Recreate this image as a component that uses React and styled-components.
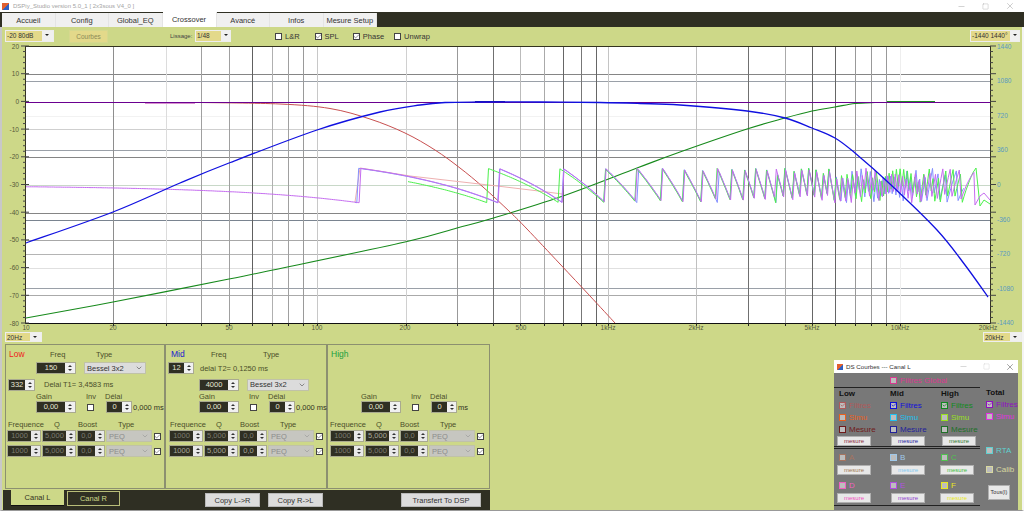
import React from 'react'
import styled, { createGlobalStyle } from 'styled-components'
import { Minus, Square, X, ChevronDown, Check } from 'lucide-react'

const Global = createGlobalStyle`
  html, body { margin: 0; padding: 0; background: #fff; }
  body { font-family: "Liberation Sans", Arial, sans-serif; }
  * { box-sizing: border-box; }
`

// frequency axis: 291px per decade, starting at 10Hz on x=26
const xToF = x => 10 * Math.pow(10, (x - 26) / 291)
const dbLines = [
  [74, '#858585'], [81, '#9aa0a8'], [116, '#f2f2f2'], [129, '#cfcfcf'], [150, '#9aa0a8'], [157, '#858585'],
  [185, '#c8d8c8'], [213, '#858585'], [220, '#7a8490'], [240, '#a8a8a8'], [254, '#b4b4b4'], [268, '#e0e0e0'],
  [288, '#9aa0a8'], [295, '#aaa'],
]
const freqLines = [
  [113, '#8e8e8e'], [166, '#dcdcdc'], [201, '#a0a0a0'], [229, '#a0a0a0'], [252, '#606060'], [272, '#b0b0b0'],
  [288, '#a0a0a0'], [303, '#9a9a9a'], [317, '#c8c8c8'], [406, '#d0d0d0'], [457, '#999'], [493, '#707070'],
  [520, '#bbb'], [544, '#aaa'], [563, '#666'], [581, '#777'], [596, '#666'], [608, '#c4c4c4'], [696, '#c0c0c0'],
  [748, '#707070'], [785, '#aaa'], [812, '#666'], [835, '#666'], [855, '#999'], [871, '#999'], [886, '#999'], [900, '#eee'],
]
const dbLabels = [20, 10, 0, -10, -20, -30, -40, -50, -60, -70, -80]
const phaseLabels = [1440, 1080, 720, 360, 0, -360, -720, -1080, -1440]
const freqLabels = [
  [26, '10'], [113, '20'], [229, '50'], [317, '100'], [405, '200'], [521, '500'], [608, '1kHz'], [696, '2kHz'],
  [812, '5kHz'], [900, '10kHz'], [988, '20kHz'],
]
const red = [[200, 102.5], [280, 104], [330, 108.5], [370, 119], [405, 133], [435, 150], [460, 168], [483, 187], [510, 212], [527, 229], [560, 264], [590, 296], [615, 323]]
const blue = [
  [26, 243], [113, 212], [180, 183], [229, 163], [317, 130], [380, 112], [420, 105], [445, 102.5], [480, 102], [540, 102],
  [600, 102.5], [640, 103.5], [680, 105], [747, 111], [785, 118], [812, 128], [835, 138], [855, 153], [890, 184],
  [937, 230], [965, 265], [988, 297],
]
const green = [
  [26, 318], [113, 302], [229, 279], [273, 270], [405, 242], [457, 228], [490, 219], [560, 197], [637, 168], [680, 152],
  [747, 129], [785, 118], [812, 111], [835, 107], [855, 103.5], [875, 102.5],
]
const pink = [[355, 202], [360, 168], [410, 176], [497, 186], [547, 192], [562, 194]]

const toPts = list => list.map(p => p.join(',')).join(' ')

// catmull-rom through the points, so the filter curves stay round
function smooth(p) {
  let d = `M${p[0][0]},${p[0][1]}`
  for (let i = 0; i < p.length - 1; i++) {
    const a = p[i - 1] || p[i]
    const b = p[i]
    const c = p[i + 1]
    const e = p[i + 2] || c
    const c1 = [b[0] + (c[0] - a[0]) / 6, b[1] + (c[1] - a[1]) / 6]
    const c2 = [c[0] - (e[0] - b[0]) / 6, c[1] - (e[1] - b[1]) / 6]
    d += ` C${c1[0]},${c1[1]} ${c2[0]},${c2[1]} ${c[0]},${c[1]}`
  }
  return d
}

function saw(from, to, wrapAt, period) {
  const pts = []
  for (let x = from; x <= to; x += 1.83) {
    const v = (xToF(x) - wrapAt) / period + 0.5
    const frac = v - Math.floor(v + 0.5)
    pts.push([x.toFixed(1), (185.5 + frac * 34.6).toFixed(1)])
  }
  return pts
}

const bluePhase = [...saw(355, 840, 138, 280), ...saw(841, 965, 170, 268)]
const greenPhase = [
  ...saw(408, 599, 385, 293), ...saw(600, 835, 130, 280), ...saw(836, 975, 150, 292),
  [976, 168], [980, 206], [984, 200], [990, 204],
]
const violetPhase = [...saw(26, 975, 140, 280), [975, 205], [980, 196], [984, 193], [990, 200]]

function Chart() {
  return (
    <PlotSvg viewBox="0 42 1024 290">
      <rect x="26" y="46" width="964" height="277" fill="#fff" />
      {dbLines.map(([v, c]) => <line key={v} x1="26" x2="990" y1={v + 0.5} y2={v + 0.5} stroke={c} />)}
      {freqLines.map(([v, c]) => <line key={v} x1={v + 0.5} x2={v + 0.5} y1="46" y2="323" stroke={c} />)}
      <path d={smooth(green)} fill="none" stroke="#178a1c" strokeWidth="1.1" />
      <path d={smooth(red)} fill="none" stroke="#c85050" strokeWidth="1" />
      <line x1="145" x2="195" y1="103.5" y2="103.5" stroke="#d890d0" />
      <line x1="26" x2="990" y1="102.5" y2="102.5" stroke="#6a0090" strokeWidth="1.2" />
      <line x1="887" x2="935" y1="101.5" y2="101.5" stroke="#209020" />
      <line x1="475" x2="505" y1="101.5" y2="101.5" stroke="#202070" />
      <polyline points={toPts(pink)} fill="none" stroke="#eeb0b0" strokeWidth="1" />
      <polyline points={toPts(bluePhase)} fill="none" stroke="#8590ff" strokeWidth="1" />
      <polyline points={toPts(greenPhase)} fill="none" stroke="#4cf04c" strokeWidth="1" />
      <polyline points={toPts(violetPhase)} fill="none" stroke="#c56cf0" strokeWidth="1" />
      <path d={smooth(blue)} fill="none" stroke="#1010e0" strokeWidth="1.3" />
      <line x1="26" x2="990" y1="46.5" y2="46.5" stroke="#33331f" />
      <line x1="26" x2="990" y1="323.5" y2="323.5" stroke="#111" />
      <line x1="25.5" x2="25.5" y1="46" y2="324" stroke="#33331f" />
      <line x1="990.5" x2="990.5" y1="46" y2="324" stroke="#33331f" />
      {freqLines.map(([v]) => <line key={v} x1={v + 0.5} x2={v + 0.5} y1="323" y2="326" stroke="#222" />)}
      {Array.from({ length: 51 }, (_, i) => 46 + i * 5.54).map((v, i) => (
        <g key={v}>
          <line x1={i % 5 === 0 ? 21 : 23} x2={i % 5 === 0 ? 29 : 26} y1={v} y2={v} stroke="#444" />
          <line x1={990} x2={i % 5 === 0 ? 996 : 993} y1={v} y2={v} stroke="#444" />
        </g>
      ))}
      {dbLabels.map((v, i) => <AxisText key={v} x="19" y={46 + i * 27.7 + 2.5} textAnchor="end">{v}</AxisText>)}
      {phaseLabels.map((v, i) => <PhaseText key={v} x="997" y={46 + i * 34.62 + 2.5}>{v}</PhaseText>)}
      {freqLabels.map(([v, t]) => <AxisText key={t} x={v} y="330" textAnchor="middle">{t}</AxisText>)}
    </PlotSvg>
  )
}

function Combo({ text, w, h = 12, arrowW = 11 }) {
  return (
    <ComboBox $w={w} $h={h}>
      <ComboText>{text}</ComboText>
      <ComboArrow $w={arrowW} />
    </ComboBox>
  )
}

function Spin({ value, w, bw = 9, tone, h = 12 }) {
  return (
    <SpinBox $w={w} $h={h}>
      <SpinField $tone={tone}>{value}</SpinField>
      <SpinBtns $w={bw} $tone={tone}>
        <ArrowUp />
        <ArrowDown />
      </SpinBtns>
    </SpinBox>
  )
}

function Sel({ text, w, off }) {
  return (
    <SelBox $w={w} $off={off}>
      <span>{text}</span>
      <ChevronDown size={8} strokeWidth={1.5} />
    </SelBox>
  )
}

function Tick({ on, ml }) {
  return <TickBox $ml={ml}>{on && <Check size={7} strokeWidth={1.8} />}</TickBox>
}

function PeqRows({ pl, tones }) {
  return (
    <>
      {tones.map((t, i) => (
        <PeqRow key={i} $pl={pl}>
          <Spin value="1000" w={34} tone={t[0]} />
          <Spin value="5,000" w={34} tone={t[1]} />
          <Spin value="0,0" w={28} tone={t[2]} />
          <Sel text="PEQ" w={46} off />
          <Tick on ml={1} />
        </PeqRow>
      ))}
    </>
  )
}

function PeqHead({ pl }) {
  return (
    <LabelRow $pl={pl} $mt={7} $mb={1}>
      <Lbl $w={46}>Frequence</Lbl>
      <Lbl $w={24}>Q</Lbl>
      <Lbl $w={40}>Boost</Lbl>
      <Lbl>Type</Lbl>
    </LabelRow>
  )
}

function GainRows({ pl, note }) {
  return (
    <>
      <LabelRow $pl={pl} $mt={1}>
        <Lbl $w={50}>Gain</Lbl>
        <Lbl $w={19}>Inv</Lbl>
        <Lbl>Délai</Lbl>
      </LabelRow>
      <ParamRow $pl={pl}>
        <Spin value="0,00" w={40} bw={10} />
        <Tick ml={11} />
        <SpinGap><Spin value="0" w={26} /></SpinGap>
        <Note>{note}</Note>
      </ParamRow>
    </>
  )
}

function Item({ color, label, on }) {
  return (
    <LegendItem $c={color}>
      <LegendBox $c={color}>{on && <Check size={6} strokeWidth={3} />}</LegendBox>
      {label}
    </LegendItem>
  )
}

function CourbesWindow() {
  return (
    <Win>
      <WinTitle>
        <WinIcon />
        <span>DS Courbes --- Canal L</span>
        <WinCtl>
          <Minus size={9} strokeWidth={1} color="#999" />
          <Square size={7} strokeWidth={1} color="#bbb" />
          <X size={10} strokeWidth={1} color="#222" />
        </WinCtl>
      </WinTitle>
      <GlobalRow><Item color="#d83a90" label="Filtres Global" /></GlobalRow>
      <WinBody>
        <WinLeft>
          <Block>
            <Col>
              <Head>Low</Head>
              <Item color="#b05a5a" label="Filtres" on />
              <Item color="#e8601e" label="Simu" />
              <Item color="#701a1a" label="Mesure" />
              <Measure $c="#8a2a3a" $ml={-2}>mesure</Measure>
            </Col>
            <Col>
              <Head>Mid</Head>
              <Item color="#1010d8" label="Filtres" on />
              <Item color="#20c0f0" label="Simu" />
              <Item color="#22229a" label="Mesure" />
              <Measure $c="#2222a0" $ml={1}>mesure</Measure>
            </Col>
            <Col>
              <Head>High</Head>
              <Item color="#108a20" label="Filtres" on />
              <Item color="#98e020" label="Simu" />
              <Item color="#207028" label="Mesure" />
              <Measure $c="#307a30" $ml={1}>mesure</Measure>
            </Col>
          </Block>
          <Block $second>
            <Col $tight>
              <Item color="#a57460" label="A" />
              <Measure $c="#a07a50" $ml={-2}>mesure</Measure>
              <Item color="#f060c0" label="D" />
              <Measure $c="#f050c0" $ml={-2}>mesure</Measure>
            </Col>
            <Col $tight>
              <Item color="#a0c8e8" label="B" />
              <Measure $c="#80c8f0" $ml={1}>mesure</Measure>
              <Item color="#b050e0" label="E" />
              <Measure $c="#9040d0" $ml={1}>mesure</Measure>
            </Col>
            <Col $tight>
              <Item color="#50c050" label="C" />
              <Measure $c="#40c040" $ml={-1}>mesure</Measure>
              <Item color="#e8e820" label="F" />
              <Measure $c="#e8e820" $ml={-1}>mesure</Measure>
            </Col>
          </Block>
        </WinLeft>
        <WinRight>
          <Head>Total</Head>
          <Item color="#9010c0" label="Filtres" on />
          <Item color="#e030e0" label="Simu" />
          <RtaGap><Item color="#60d0d0" label="RTA" /></RtaGap>
          <CalGap><Item color="#d8d8a0" label="Calib" /></CalGap>
          <TousBtn>Tous(I)</TousBtn>
        </WinRight>
      </WinBody>
    </Win>
  )
}

export default function App() {
  return (
    <Page>
      <Global />
      <TitleBar>
        <AppIcon />
        <TitleText>DSPiy_Studio version 5.0_1 [ 2x3sous V4_0 ]</TitleText>
        <TitleCtl>
          <Minus size={9} strokeWidth={1} color="#888" />
          <Square size={7} strokeWidth={1} color="#888" />
          <X size={10} strokeWidth={1} color="#888" />
        </TitleCtl>
      </TitleBar>
      <TabBar>
        {['Accueil', 'Config', 'Global_EQ', 'Crossover', 'Avancé', 'Infos', 'Mesure Setup'].map(t => (
          <Tab key={t} $active={t === 'Crossover'}>{t}</Tab>
        ))}
      </TabBar>
      <Main>
        <Toolbar>
          <Combo text="-20  80dB" w={49} />
          <CourbesBtn>Courbes</CourbesBtn>
          <Lissage>Lissage:</Lissage>
          <Combo text="1/48" w={36} arrowW={9} />
          <CheckWrap $ml={44}><Tick /> L&amp;R</CheckWrap>
          <CheckWrap $ml={15}><Tick on /> SPL</CheckWrap>
          <CheckWrap $ml={14}><Tick on /> Phase</CheckWrap>
          <CheckWrap $ml={10}><Tick /> Unwrap</CheckWrap>
          <PushRight><Combo text="-1440  1440°" w={50} arrowW={9} /></PushRight>
        </Toolbar>
        <Chart />
        <RangeRow>
          <Combo text="20Hz" w={37} h={10} />
          <Combo text="20kHz" w={39} h={10} />
        </RangeRow>
        <Lower>
          <Panel $w={160}>
            <LabelRow $pl={3} $h={15}>
              <BandName $c="#f02020" $w={41}>Low</BandName>
              <Lbl $w={46}>Freq</Lbl>
              <Lbl>Type</Lbl>
            </LabelRow>
            <ParamRow $pl={30}>
              <Spin value="150" w={40} bw={10} />
              <SelGap><Sel text="Bessel  3x2" w={62} /></SelGap>
            </ParamRow>
            <DelayRow $pl={2}>
              <Spin value="332" w={27} />
              <DelayText $ml={9}>Delai T1= 3,4583 ms</DelayText>
            </DelayRow>
            <GainRows pl={30} note="0,000 ms" />
            <PeqHead pl={2} />
            <PeqRows pl={1} tones={[[1, 1, 1], [1, 1, 1]]} />
          </Panel>
          <Panel $w={162}>
            <LabelRow $pl={5} $h={15}>
              <BandName $c="#1818d0" $w={40}>Mid</BandName>
              <Lbl $w={52}>Freq</Lbl>
              <Lbl>Type</Lbl>
            </LabelRow>
            <ParamRow $pl={2}>
              <Spin value="12" w={26} />
              <DelayText $ml={6}>delai T2= 0,1250 ms</DelayText>
            </ParamRow>
            <DelayRow $pl={33}>
              <Spin value="4000" w={40} bw={10} />
              <SelGap><Sel text="Bessel  3x2" w={62} /></SelGap>
            </DelayRow>
            <GainRows pl={33} note="0,000 ms" />
            <PeqHead pl={4} />
            <PeqRows pl={3} tones={[[1, 1, 1], [0, 0, 0]]} />
          </Panel>
          <Panel $w={163}>
            <LabelRow $pl={3} $h={15}>
              <BandName $c="#20a040">High</BandName>
            </LabelRow>
            <EmptyRows />
            <GainRows pl={33} note="ms" />
            <PeqHead pl={2} />
            <PeqRows pl={2} tones={[[1, 0, 1], [1, 1, 1]]} />
          </Panel>
        </Lower>
        <BottomBar>
          <CanalTab $active>Canal L</CanalTab>
          <CanalTab>Canal R</CanalTab>
          <GreyBtn $w={55} $ml={85}>Copy L-&gt;R</GreyBtn>
          <GreyBtn $w={55} $ml={8}>Copy R-&gt;L</GreyBtn>
          <GreyBtn $w={80} $ml={78}>Transfert To DSP</GreyBtn>
        </BottomBar>
        <CourbesWindow />
      </Main>
    </Page>
  )
}

const Page = styled.div`
  width: 1024px;
  height: 513px;
  overflow: hidden;
  display: flex;
  flex-direction: column;
  background: #fff;
  color: #33331f;
`
const TitleBar = styled.div`
  height: 12px;
  display: flex;
  align-items: center;
  padding-left: 2px;
`
const AppIcon = styled.div`
  width: 7px;
  height: 7px;
  background: linear-gradient(135deg, #e06030 50%, #3060c0 50%);
  margin-right: 4px;
`
const TitleText = styled.span`
  font-size: 6px;
  color: #a4a4a4;
`
const TitleCtl = styled.div`
  margin-left: auto;
  display: flex;
  align-items: center;
  gap: 16px;
  padding-right: 9px;
`
const TabBar = styled.div`
  height: 15px;
  background: #2f2f23;
  display: flex;
  align-items: flex-end;
  padding-left: 2px;
`
const Tab = styled.div`
  width: ${p => (p.$active ? 54 : 53.5)}px;
  height: ${p => (p.$active ? 15 : 14)}px;
  background: ${p => (p.$active ? '#fff' : '#f0f0f0')};
  border-right: 1px solid #e4e4e4;
  font-size: 7.5px;
  color: #333;
  display: flex;
  align-items: center;
  justify-content: center;
`
const Main = styled.div`
  position: relative;
  width: 1024px;
  height: 484px;
  background: #cdd888;
  border-left: 2px solid #c8c8c8;
  border-right: 2px solid #f4f4f4;
  border-bottom: 1px solid #999;
  display: flex;
  flex-direction: column;
  flex: none;
`
const Toolbar = styled.div`
  height: 15px;
  padding: 3px 2px 0 3px;
  display: flex;
  align-items: flex-start;
  font-size: 8px;
`
const ComboBox = styled.div`
  width: ${p => p.$w}px;
  height: ${p => p.$h}px;
  display: flex;
  border: 1px solid #eee;
  background: #e3d98a;
  flex: none;
`
const ComboText = styled.div`
  flex: 1;
  font-size: 6.5px;
  line-height: 9px;
  padding-left: 1px;
  color: #333;
  white-space: nowrap;
  overflow: hidden;
`
const ComboArrow = styled.div`
  width: ${p => p.$w}px;
  background: #f0f0f0;
  position: relative;
  &::after {
    content: '';
    position: absolute;
    left: 3px;
    top: 3px;
    border: 2px solid transparent;
    border-top: 2px solid #222;
  }
`
const CourbesBtn = styled.div`
  width: 39px;
  height: 13px;
  margin-left: 15px;
  background: #e3d98a;
  border: 1px solid #d6d88e;
  font-size: 6.5px;
  line-height: 11px;
  text-align: center;
  color: #8d8a58;
`
const Lissage = styled.div`
  margin-left: 62px;
  width: 25px;
  font-size: 6px;
  line-height: 13px;
  color: #444;
`
const CheckWrap = styled.div`
  margin-left: ${p => p.$ml}px;
  display: flex;
  align-items: center;
  gap: 3px;
  height: 12px;
  font-size: 7.5px;
  color: #333;
`
const PushRight = styled.div`
  margin-left: auto;
`
const PlotSvg = styled.svg`
  width: 1024px;
  height: 290px;
  margin-left: -2px;
  flex: none;
  display: block;
`
const AxisText = styled.text`
  font-size: 6.5px;
  fill: #55583a;
`
const PhaseText = styled.text`
  font-size: 6.5px;
  fill: #5a9ac0;
`
const RangeRow = styled.div`
  height: 12px;
  display: flex;
  justify-content: space-between;
  align-items: flex-start;
  padding-left: 3px;
`
const Lower = styled.div`
  height: 146px;
  padding-left: 3px;
  padding-bottom: 1px;
  display: flex;
`
const Panel = styled.div`
  width: ${p => p.$w}px;
  border: 1px solid #8c9070;
  padding-top: 2px;
  display: flex;
  flex-direction: column;
`
const LabelRow = styled.div`
  display: flex;
  align-items: center;
  height: ${p => p.$h || 9}px;
  padding-left: ${p => p.$pl}px;
  margin-top: ${p => p.$mt || 0}px;
  margin-bottom: ${p => p.$mb || 0}px;
`
const Lbl = styled.div`
  width: ${p => (p.$w ? p.$w + 'px' : 'auto')};
  flex: none;
  font-size: 7.5px;
  color: #4b4f2a;
  white-space: nowrap;
`
const BandName = styled.div`
  width: ${p => (p.$w ? p.$w + 'px' : 'auto')};
  font-size: 8.5px;
  margin-top: -2px;
  color: ${p => p.$c};
  flex: none;
`
const ParamRow = styled.div`
  display: flex;
  align-items: center;
  height: 12px;
  padding-left: ${p => p.$pl}px;
`
const DelayRow = styled(ParamRow)`
  margin-top: 4px;
  height: 13px;
`
const EmptyRows = styled.div`
  height: 29px;
`
const DelayText = styled.span`
  margin-left: ${p => p.$ml}px;
  font-size: 7.5px;
  color: #4b4f2a;
  white-space: nowrap;
`
const SelGap = styled.div`
  margin-left: 8px;
`
const SpinGap = styled.div`
  margin-left: 12px;
`
const Note = styled.span`
  margin-left: 1px;
  font-size: 7.5px;
  color: #33331f;
  white-space: nowrap;
`
const PeqRow = styled(ParamRow)`
  gap: 1px;
  margin-bottom: 3px;
`
const SpinBox = styled.div`
  width: ${p => p.$w}px;
  height: ${p => p.$h}px;
  flex: none;
  display: flex;
  border: 1px solid #a9aa90;
`
const toneColor = t => (t === undefined ? '#e6e6d4' : t === 1 ? '#7c7c70' : '#a8a89a')
const SpinField = styled.div`
  flex: 1;
  background: #2f2f23;
  color: ${p => toneColor(p.$tone)};
  font-size: 7.5px;
  line-height: 10px;
  text-align: center;
  white-space: nowrap;
  overflow: hidden;
`
const SpinBtns = styled.div`
  width: ${p => p.$w}px;
  background: ${p => (p.$tone === undefined ? '#f0f0f0' : '#e8e8e8')};
  display: flex;
  flex-direction: column;
  align-items: center;
  justify-content: center;
  gap: 2px;
  flex: none;
`
const ArrowUp = styled.i`
  display: block;
  border-left: 2px solid transparent;
  border-right: 2px solid transparent;
  border-bottom: 2px solid #333;
`
const ArrowDown = styled.i`
  display: block;
  border-left: 2px solid transparent;
  border-right: 2px solid transparent;
  border-top: 2px solid #333;
`
const SelBox = styled.div`
  width: ${p => p.$w}px;
  height: 12px;
  flex: none;
  padding: 0 2px;
  background: ${p => (p.$off ? '#c6c6c0' : '#dcdcdc')};
  border: 1px solid #c0c2a8;
  color: ${p => (p.$off ? '#8c8c8c' : '#333')};
  font-size: 7.5px;
  display: flex;
  align-items: center;
  justify-content: space-between;
  white-space: nowrap;
`
const TickBox = styled.div`
  width: 7px;
  height: 7px;
  margin-left: ${p => p.$ml || 0}px;
  flex: none;
  background: #fff;
  border: 1px solid #444;
  display: flex;
  align-items: center;
  justify-content: center;
  color: #333;
  svg { flex: none; }
`
const BottomBar = styled.div`
  height: 20px;
  width: 487px;
  margin-left: 1px;
  background: #2f2f23;
  display: flex;
  align-items: flex-start;
  padding-left: 8px;
`
const CanalTab = styled.div`
  width: 53px;
  height: ${p => (p.$active ? 16 : 15)}px;
  margin-right: ${p => (p.$active ? 3 : 0)}px;
  margin-top: ${p => (p.$active ? 0 : 1)}px;
  background: ${p => (p.$active ? '#cdd888' : '#2f2f23')};
  border: ${p => (p.$active ? 'none' : '1px solid #b8bd78')};
  border-bottom: ${p => (p.$active ? '1px solid #111' : '1px solid #b8bd78')};
  color: ${p => (p.$active ? '#33331f' : '#cdd888')};
  font-size: 7.5px;
  display: flex;
  align-items: center;
  justify-content: center;
`
const GreyBtn = styled.div`
  width: ${p => p.$w}px;
  height: 14px;
  margin-top: 3px;
  margin-left: ${p => p.$ml}px;
  background: #dcdcdc;
  border: 1px solid #b8b8b8;
  color: #333;
  font-size: 7.5px;
  display: flex;
  align-items: center;
  justify-content: center;
`
const Win = styled.div`
  position: absolute;
  left: 832px;
  top: 333px;
  width: 184px;
  height: 150px;
  background: #787878;
  display: flex;
  flex-direction: column;
`
const WinTitle = styled.div`
  height: 13px;
  background: #fff;
  display: flex;
  align-items: center;
  padding-left: 3px;
  font-size: 6.2px;
  color: #333;
`
const WinIcon = styled.div`
  width: 6px;
  height: 6px;
  margin-right: 3px;
  background: linear-gradient(135deg, #e06030 50%, #3060c0 50%);
`
const WinCtl = styled.div`
  margin-left: auto;
  display: flex;
  align-items: center;
  gap: 15px;
  padding-right: 3px;
`
const GlobalRow = styled.div`
  height: 14px;
  padding-left: 56px;
  display: flex;
  align-items: center;
`
const WinBody = styled.div`
  flex: 1;
  display: flex;
`
const WinLeft = styled.div`
  width: 146px;
  flex: none;
`
const Block = styled.div`
  display: grid;
  grid-template-columns: 51px 51px 39px;
  border-top: 1px solid #222;
  border-bottom: 1px solid #222;
  margin-top: ${p => (p.$second ? 1 : 0)}px;
  height: ${p => (p.$second ? 58 : 60)}px;
  padding: ${p => (p.$second ? '2px 0 0 5px' : '0 0 0 5px')};
`
const Col = styled.div`
  display: flex;
  flex-direction: column;
  gap: ${p => (p.$tight ? 1 : 0)}px;
  & > :nth-child(3) {
    margin-top: ${p => (p.$tight ? 3 : 0)}px;
  }
`
const Head = styled.div`
  height: 11px;
  font-size: 8px;
  font-weight: 700;
  color: #111;
  line-height: 11px;
`
const LegendItem = styled.div`
  height: 12px;
  display: flex;
  align-items: center;
  gap: 3px;
  font-size: 8px;
  color: ${p => p.$c};
  white-space: nowrap;
`
const LegendBox = styled.div`
  width: 7px;
  height: 7px;
  flex: none;
  background: #bdbdbd;
  border: 1px solid ${p => p.$c};
  color: ${p => p.$c};
  display: flex;
  align-items: center;
  justify-content: center;
  svg { flex: none; }
`
const Measure = styled.div`
  width: 34px;
  height: 10px;
  margin-top: 1px;
  margin-left: ${p => p.$ml || 0}px;
  background: #e8e8e8;
  border: 1px solid #b0b0b0;
  color: ${p => p.$c};
  font-size: 6px;
  text-align: center;
  line-height: 8px;
`
const WinRight = styled.div`
  flex: 1;
  padding-left: 6px;
  display: flex;
  flex-direction: column;
`
const RtaGap = styled.div`
  margin-top: 22px;
`
const CalGap = styled.div`
  margin-top: 7px;
`
const TousBtn = styled.div`
  width: 22px;
  height: 15px;
  margin: 10px 0 0 2px;
  background: #e8e8e8;
  border: 1px solid #b0b0b0;
  font-size: 5.5px;
  text-align: center;
  line-height: 13px;
  color: #333;
`
